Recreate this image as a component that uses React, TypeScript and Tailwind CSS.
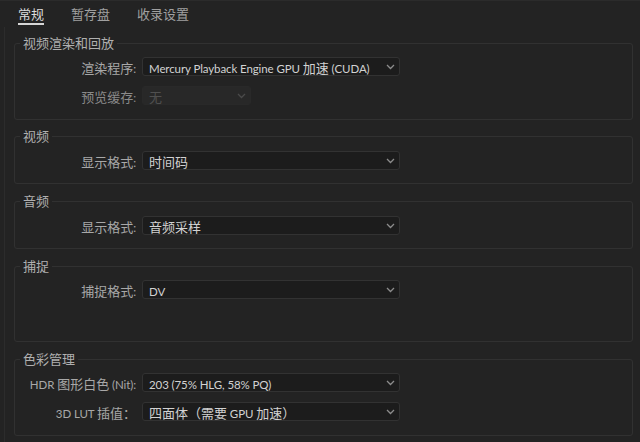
import React from "react";

const font = {
  fontFamily: 'Lato, "Noto Sans CJK SC", sans-serif',
};

// latin runs are drawn a bit smaller and tighter than the CJK glyphs
const Txt = ({ text }: { text: string }) => (
  <>
    {text.split(/([\u3000-\u9fff\uff00-\uffef]+)/).map((part, i) =>
      /[\u3000-\u9fff\uff00-\uffef]/.test(part) ? (
        <span key={i} className="text-[13px]">
          {part}
        </span>
      ) : (
        <span key={i} className="text-[11.5px] tracking-[-0.1px]">
          {part}
        </span>
      )
    )}
  </>
);

const Chevron = ({ dim }: { dim?: boolean }) => (
  <svg width="9" height="6" viewBox="0 0 9 6" className="shrink-0">
    <path
      d="M1 1 L4.5 4.5 L8 1"
      fill="none"
      stroke={dim ? "#4a4a4a" : "#8c8c8c"}
      strokeWidth="1.3"
    />
  </svg>
);

const Select = ({
  value,
  disabled,
  width = "w-[258px]",
}: {
  value: string;
  disabled?: boolean;
  width?: string;
}) => (
  <div
    className={`${width} h-[19px] flex items-center justify-between pl-[6px] pr-[4px] rounded-[3px] border ${
      disabled
        ? "border-[#292929] bg-[#282828] text-[#505050]"
        : "border-[#323232] bg-[#1c1c1c] text-[#d2d2d2]"
    }`}
  >
    <span className="leading-none whitespace-nowrap">
      <Txt text={value} />
    </span>
    <Chevron dim={disabled} />
  </div>
);

const Row = ({
  label,
  value,
  disabled,
  width,
}: {
  label: string;
  value: string;
  disabled?: boolean;
  width?: string;
}) => (
  <div className="flex items-center h-[19px]">
    <div
      className={`w-[127px] pr-[6px] text-right leading-none whitespace-nowrap ${
        disabled ? "text-[#8a8a8a]" : "text-[#a8a8a8]"
      }`}
    >
      <Txt text={label} />
    </div>
    <Select value={value} disabled={disabled} width={width} />
  </div>
);

const Group = ({
  title,
  className,
  children,
}: {
  title: string;
  className: string;
  children: React.ReactNode;
}) => (
  <div
    className={`relative w-[619px] border border-[#313131] rounded-[3px] ${className}`}
  >
    <span className="absolute -top-[9px] left-[5px] px-[3px] bg-[#232323] text-[13px] leading-[16px] text-[#b0b0b0]">
      {title}
    </span>
    <div className="flex flex-col gap-[10px]">{children}</div>
  </div>
);

export default function App() {
  return (
    <div
      className="w-[640px] h-[442px] bg-[#232323] overflow-hidden border-t border-[#2b2b2b]"
      style={font}
    >
      {/* TABS */}
      <div className="flex h-[26px] pl-[18px] gap-[27px] text-[13px]">
        <div className="relative pt-[4px] text-[#dcdcdc]">
          常规
          <div className="absolute left-0 right-0 top-[22px] h-[2px] bg-[#d6d6d6]" />
        </div>
        <div className="pt-[4px] text-[#a0a0a0]">暂存盘</div>
        <div className="pt-[4px] text-[#a0a0a0]">收录设置</div>
      </div>
      {/* PANEL */}
      <div className="ml-[4px] border-l border-[#2c2c2c] h-[420px] pl-[9px] pt-[16px]">
        <Group title="视频渲染和回放" className="h-[77px] pt-[13px]">
          <Row label="渲染程序:" value="Mercury Playback Engine GPU 加速 (CUDA)" />
          <Row label="预览缓存:" value="无" disabled width="w-[109px]" />
        </Group>
        <Group title="视频" className="mt-[16px] h-[48px] pt-[14px]">
          <Row label="显示格式:" value="时间码" />
        </Group>
        <Group title="音频" className="mt-[17px] h-[48px] pt-[14px]">
          <Row label="显示格式:" value="音频采样" />
        </Group>
        <Group title="捕捉" className="mt-[17px] h-[76px] pt-[13px]">
          <Row label="捕捉格式:" value="DV" />
        </Group>
        <Group title="色彩管理" className="mt-[17px] h-[77px] pt-[13px]">
          <Row label="HDR 图形白色 (Nit):" value="203 (75% HLG, 58% PQ)" />
          <Row label="3D LUT 插值：" value="四面体（需要 GPU 加速）" />
        </Group>
      </div>
    </div>
  );
}
